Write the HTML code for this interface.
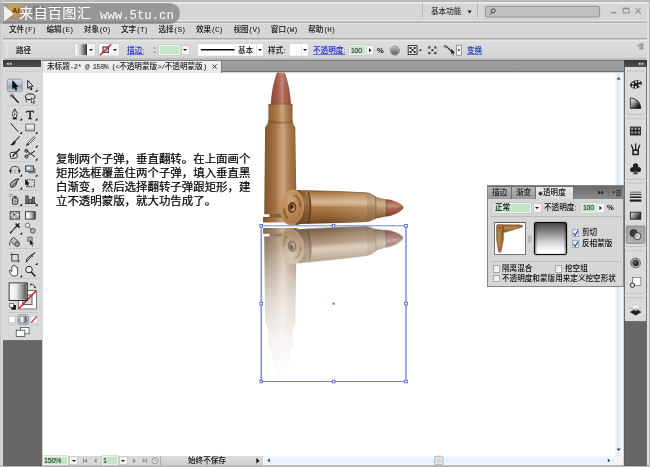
<!DOCTYPE html>
<html lang="zh-CN">
<head>
<meta charset="utf-8">
<title>Adobe Illustrator - 未标题-2</title>
<style>
*{box-sizing:border-box;margin:0;padding:0}
html,body{width:650px;height:467px;overflow:hidden;background:#d3d3d3}
body{position:relative;font-family:"Liberation Sans","Noto Sans CJK SC",sans-serif;font-size:7.65px;color:#1c1c1c}
.a{position:absolute}
.t{position:absolute;white-space:nowrap;line-height:10px;height:10px;font-size:7.6px;color:#101010;font-weight:500}
.lnk{color:#1c2cc8;text-decoration:underline;text-decoration-thickness:.5px;text-underline-offset:.8px;text-decoration-color:rgba(28,44,200,.55)}
.fld{position:absolute;background:#c2e6c8;border:.9px solid #f1f1f1;box-shadow:0 0 0 .5px #bcbcbc}
.btn{position:absolute;background:#f3f3f3;border:.5px solid #d0d0d0}
.btn:after{content:"";position:absolute;left:50%;top:50%;margin:-.8px 0 0 -2.2px;border:2.2px solid transparent;border-top:2.6px solid #111;border-bottom:0}
#title{left:0;top:0;width:650px;height:23px;background:linear-gradient(#c8c8c8 0,#b6b6b6 .7px,#b6b6b6 1.7px,#ececec 2.4px,#ececec 3.3px,#d6d6d6 4px,#d6d6d6 19.8px,#e2e2e2 20.3px,#e2e2e2 21.2px,#b2b2b2 21.7px,#b2b2b2 22.7px,#e2e2e2 23px)}
#menu{left:0;top:23px;width:650px;height:17.8px;background:linear-gradient(#e2e2e2 0,#e2e2e2 .8px,#d6d6d6 1.4px,#d6d6d6 14.8px,#a6a6a6 15.2px,#a6a6a6 16.1px,#e8e8e8 16.8px,#e8e8e8 17.8px)}
#menu span{position:absolute;top:1.6px;line-height:10px;font-size:7.6px;color:#101010;white-space:nowrap;font-weight:500}
.e,#menu i{font-family:"Liberation Mono",monospace;font-style:normal;letter-spacing:-.76px;font-size:7.6px}
#ctrlbg{left:0;top:40.8px;width:650px;height:20px;background:#d6d6d6}
#ctrl{left:4px;top:40.8px;width:642.4px;height:19.2px;background:linear-gradient(#dddddd 0,#d5d5d5 17.2px,#b4b4b4 17.6px,#b4b4b4 18.4px,#dcdcdc 18.8px,#dcdcdc 19.2px)}
#tabs{left:4px;top:59.9px;width:643px;height:12.6px;background:linear-gradient(#7c7c7c 0,#7c7c7c .8px,#a0a0a0 1.5px,#969696 11px,#707070 11.6px,#707070 12.6px)}
#tab{left:42px;top:60.6px;width:179.6px;height:12px;background:linear-gradient(#f0f0f0,#e8e8e8);border-right:1px solid #7e7e7e;border-left:1px solid #c8c8c8}
#tabt{left:47.4px;top:61.6px;font-size:7.6px;color:#222}
#canvas{left:42.5px;top:72.5px;width:571.5px;height:383px;background:#fff}
#vscroll{left:613.8px;top:72.5px;width:9.5px;height:383px;background:linear-gradient(90deg,#fdfeff,#dfebfa 40%,#e9f1fb 70%,#fbfdff)}
#hscroll{left:262px;top:455.5px;width:352px;height:9.6px;background:linear-gradient(#f6faff,#e3eefb 50%,#f2f7fd)}
#corner{left:613.8px;top:455.5px;width:9.6px;height:9.8px;background:#f4f4f4}
#tools{left:3.1px;top:60px;width:38.8px;height:281px;background:#d9d9d9}
#toolhead{left:3.1px;top:60px;width:38.4px;height:7.4px;background:linear-gradient(#383838,#505050)}
#ldark{left:3.1px;top:340px;width:38.8px;height:125.6px;background:linear-gradient(#7a7a7a 0,#666 1.2px,#666 100%)}
#rdock{left:623.5px;top:60px;width:23.6px;height:261.5px;background:#dadada;border-left:1px solid #6e6e6e;border-right:1px solid #7c7c7c}
#rhead{left:624.2px;top:60px;width:22.6px;height:7.4px;background:linear-gradient(#383838,#505050)}
#rdark{left:623.5px;top:320.9px;width:23.6px;height:144.8px;background:linear-gradient(#7a7a7a 0,#666 1.2px,#666 100%);border-left:1px solid #5a5a5a;border-right:1px solid #6a6a6a}
#ledge{left:0;top:2px;width:3.1px;height:465px;background:linear-gradient(90deg,#c6c6ce 0,#cfcfd6 1.2px,#d8d8d8 1.6px,#d6d6d6 100%)}
#redge{left:647.1px;top:2px;width:2.9px;height:465px;background:linear-gradient(90deg,#e0e0e0 0,#dedede 1.8px,#b4b4b4 2.2px,#b4b4b4 100%)}
#bedge{left:0;top:465.4px;width:650px;height:1.6px;background:#b9b9b9}
#status{left:42.5px;top:455.5px;width:220px;height:9.8px;background:#d8d8d8}
#desc{left:55.6px;top:152.9px;font-size:11.45px;line-height:13.85px;color:#000;font-weight:400;-webkit-text-stroke:.22px #000;white-space:nowrap;font-family:"Liberation Sans","Noto Sans CJK SC",sans-serif}
#wm{left:-14px;top:2.8px;width:194.4px;height:21px;border-radius:10.5px;background:rgba(90,90,90,.51)}
#wmt{left:18.7px;top:3.1px;height:21px;line-height:21px;color:#fff;white-space:nowrap;font-size:14.2px;letter-spacing:.22px}
#wmt b{font-family:"Liberation Mono",monospace;font-weight:normal;font-size:12.3px;margin-left:9px;letter-spacing:0;position:relative;top:.8px}
#panel{left:487.4px;top:185.4px;width:136.6px;height:101.8px;background:#d6d6d6;border:1px solid #868686}
#ptabs{left:488.4px;top:186.2px;width:134.6px;height:12.6px;background:linear-gradient(#6a6a6a,#8c8c8c)}
.ptab{position:absolute;top:186.6px;height:12.2px;background:linear-gradient(#b4b4b4,#9c9c9c);border-right:1px solid #6e6e6e}
.chk{position:absolute;width:7.6px;height:7.6px;background:linear-gradient(135deg,#e2e2e2,#fff);border:.7px solid #a2aab4}
svg{position:absolute;left:0;top:0;overflow:visible}
.t,#menu,#desc,#wmt,#tabt{will-change:transform}
</style>
</head>
<body>
<div id="title" class="a"></div>
<div id="menu" class="a">
<span style="left:9px">文件<i>(F)</i></span><span style="left:46.4px">编辑<i>(E)</i></span><span style="left:83.8px">对象<i>(O)</i></span><span style="left:121px">文字<i>(T)</i></span><span style="left:158.4px">选择<i>(S)</i></span><span style="left:196px">效果<i>(C)</i></span><span style="left:233.4px">视图<i>(V)</i></span><span style="left:270.8px">窗口<i>(W)</i></span><span style="left:308.2px">帮助<i>(H)</i></span>
</div>
<div id="ctrlbg" class="a"></div>
<div id="ctrl" class="a"></div>
<div id="ledge" class="a"></div>
<div id="redge" class="a"></div>
<div id="tabs" class="a"></div>
<div id="tab" class="a"></div>
<div id="tabt" class="t">未标题<span class="e">-2* @ 150% (&lt;</span>不透明蒙版<span class="e">&gt;/</span>不透明蒙版<span class="e">)</span></div>
<svg width="650" height="467" viewBox="0 0 650 467"><path d="M212.600 64.400l4 4.200M216.600 64.400l-4 4.200" stroke="#222" stroke-width=".9"/></svg>
<div id="canvas" class="a"></div>
<div id="vscroll" class="a"></div>
<div id="hscroll" class="a"></div>
<div id="corner" class="a"></div>
<div id="status" class="a"></div>
<div id="bedge" class="a"></div>
<svg id="art" class="a" width="650" height="467" viewBox="0 0 650 467" style="clip-path:inset(72.4px 0 0 0)">
<defs>
<linearGradient id="gBodyV" x1="0" x2="1" y1="0" y2="0">
<stop offset="0" stop-color="#7a5632"/><stop offset="0.05" stop-color="#865a30"/><stop offset="0.2" stop-color="#94653a"/><stop offset="0.36" stop-color="#a87545"/><stop offset="0.5" stop-color="#bf9670"/><stop offset="0.59" stop-color="#c9a785"/><stop offset="0.68" stop-color="#bb9064"/><stop offset="0.8" stop-color="#a87646"/><stop offset="0.93" stop-color="#9c6c40"/><stop offset="1" stop-color="#86592e"/>
</linearGradient>
<linearGradient id="gNeckV" x1="0" x2="1" y1="0" y2="0">
<stop offset="0" stop-color="#805a34"/><stop offset="0.06" stop-color="#946638"/><stop offset="0.22" stop-color="#a06e3c"/><stop offset="0.38" stop-color="#ae7e4c"/><stop offset="0.5" stop-color="#c0986e"/><stop offset="0.58" stop-color="#c8a582"/><stop offset="0.68" stop-color="#ba8e62"/><stop offset="0.82" stop-color="#a87648"/><stop offset="0.94" stop-color="#9a6a3e"/><stop offset="1" stop-color="#84582e"/>
</linearGradient>
<linearGradient id="gHeadV" x1="0" x2="1" y1="0" y2="0">
<stop offset="0" stop-color="#844436"/><stop offset="0.1" stop-color="#96503f"/><stop offset="0.3" stop-color="#a25a48"/><stop offset="0.48" stop-color="#b47262"/><stop offset="0.57" stop-color="#c08878"/><stop offset="0.68" stop-color="#ae6856"/><stop offset="0.85" stop-color="#a05a48"/><stop offset="1" stop-color="#88483a"/>
</linearGradient>
<linearGradient id="gBodyH" x1="0" x2="0" y1="0" y2="1">
<stop offset="0" stop-color="#6a4420"/><stop offset="0.04" stop-color="#a07040"/><stop offset="0.12" stop-color="#b4844e"/><stop offset="0.25" stop-color="#caa278"/><stop offset="0.34" stop-color="#d6b896"/><stop offset="0.44" stop-color="#c8a27a"/><stop offset="0.5" stop-color="#ad7a48"/><stop offset="0.65" stop-color="#a06c3a"/><stop offset="0.8" stop-color="#8c5c2e"/><stop offset="0.93" stop-color="#7a4e26"/><stop offset="1" stop-color="#5e3c1c"/>
</linearGradient>
<linearGradient id="gNeckH" x1="0" x2="0" y1="0" y2="1">
<stop offset="0" stop-color="#86623e"/><stop offset="0.08" stop-color="#b08c62"/><stop offset="0.22" stop-color="#c8a882"/><stop offset="0.4" stop-color="#ccae8a"/><stop offset="0.52" stop-color="#b8946a"/><stop offset="0.7" stop-color="#a58056"/><stop offset="0.88" stop-color="#8c663c"/><stop offset="1" stop-color="#74502c"/>
</linearGradient>
<linearGradient id="gHeadH" x1="0" x2="0" y1="0" y2="1">
<stop offset="0" stop-color="#884838"/><stop offset="0.1" stop-color="#a05a48"/><stop offset="0.28" stop-color="#b87868"/><stop offset="0.4" stop-color="#c48e7e"/><stop offset="0.52" stop-color="#b06a58"/><stop offset="0.7" stop-color="#a05846"/><stop offset="0.9" stop-color="#864436"/><stop offset="1" stop-color="#743a2e"/>
</linearGradient>
<linearGradient id="gTipH" x1="0" x2="1" y1="0" y2="0"><stop offset="0" stop-color="#5a2418" stop-opacity="0"/><stop offset=".6" stop-color="#5a2418" stop-opacity="0"/><stop offset="1" stop-color="#5a2418" stop-opacity=".35"/></linearGradient>
<linearGradient id="gBeige" x1="325" x2="376" y1="0" y2="0" gradientUnits="userSpaceOnUse"><stop offset="0" stop-color="#d8ccb8" stop-opacity="0"/><stop offset="1" stop-color="#d8ccb8" stop-opacity=".3"/></linearGradient>
<radialGradient id="gCap" cx=".4" cy=".3" r=".85">
<stop offset="0" stop-color="#cfa274"/><stop offset=".4" stop-color="#be8c5a"/><stop offset=".75" stop-color="#ac7642"/><stop offset="1" stop-color="#8e5e30"/>
</radialGradient>
<linearGradient id="gRim" x1="0" x2="0" y1="0" y2="1"><stop offset="0" stop-color="#7a5430"/><stop offset=".3" stop-color="#a07648"/><stop offset=".6" stop-color="#86592e"/><stop offset="1" stop-color="#6a4522"/></linearGradient>
<linearGradient id="gFade" x1="0" x2="0" y1="226" y2="381" gradientUnits="userSpaceOnUse">
<stop offset="0" stop-color="#fff" stop-opacity=".92"/><stop offset=".155" stop-color="#fff" stop-opacity=".7"/><stop offset=".32" stop-color="#fff" stop-opacity=".46"/><stop offset=".48" stop-color="#fff" stop-opacity=".26"/><stop offset=".74" stop-color="#fff" stop-opacity=".08"/><stop offset="1" stop-color="#fff" stop-opacity="0"/>
</linearGradient>
<filter id="fDesat" x="-5%" y="-5%" width="110%" height="110%" color-interpolation-filters="sRGB"><feColorMatrix type="saturate" values=".66"/></filter>
<mask id="mFade" maskUnits="userSpaceOnUse" x="255" y="226" width="160" height="156"><rect x="255" y="226" width="160" height="156" fill="url(#gFade)"/></mask>
<g id="bv">
<!-- vertical bullet -->
<path d="M270.8 104.4 C271.3 93 273.6 81 277.1 72.3 Q279 68.4 280.85 68.4 Q282.7 68.4 284.6 72.3 C288.1 81 290.4 93 290.9 104.4 Z" fill="url(#gHeadV)"/>
<path d="M268.4 104.2 Q280.4 102.6 292.5 104.2 L292.5 121 L268.4 121 Z" fill="url(#gNeckV)"/>
<path d="M268.4 120.4 L292.5 120.4 Q293 124.6 295.3 127.6 L295.3 129 L265.1 129 L265.1 127.6 Q267.8 124.6 268.4 120.4 Z" fill="url(#gBodyV)"/>
<path d="M265.1 128 L295.3 128 L296.6 214.2 L264.2 214.2 Z" fill="url(#gBodyV)"/>
<path d="M268.4 120.2 Q280.4 123 292.5 120.2 L293 122.600 Q280.400 125.600 267.900 122.600 Z" fill="#6e4a26" opacity=".4"/>
<path d="M268.4 104 Q280.4 102.400 292.5 104 L292.5 105.200 Q280.400 103.800 268.4 105.200 Z" fill="#6e4630" opacity=".55"/>
<rect x="269.4" y="213.8" width="27.2" height="3.4" fill="#87603a"/>
<rect x="263" y="216.9" width="34" height="5.6" rx=".8" fill="url(#gBodyV)"/>
<rect x="263" y="216.9" width="34" height="1" fill="#6e4a26" opacity=".45"/>
</g>
<g id="bh">
<!-- horizontal bullet -->
<path d="M300 190.400 L340 191.600 L366 192.800 Q369.600 193 371 194.200 L376 197.100 L376 218.500 L371 220.800 Q369.600 221.800 366 222 L340 222.900 L300 224 Z" fill="url(#gBodyH)"/>
<path d="M325 190 L366 192.800 Q369.600 193 371 194.200 L376 197.100 L376 218.500 L371 220.800 Q369.600 221.800 366 222 L325 224 Z" fill="url(#gBeige)"/>
<path d="M375.600 197 L386.200 199.300 L386.200 216.400 L375.600 218.600 Z" fill="url(#gNeckH)"/>
<path d="M385.800 199.200 C393.500 199.600 401 203.400 403.100 206.200 Q403.900 207.300 403.100 208.500 C401 211.800 393.500 216 385.800 216.500 Z" fill="url(#gHeadH)"/>
<path d="M385.800 199.200 C393.500 199.600 401 203.400 403.100 206.200 Q403.900 207.300 403.100 208.500 C401 211.800 393.500 216 385.800 216.500 Z" fill="url(#gTipH)"/>
<path d="M366 192.800 Q369.600 193 371 194.200 L376 197.100 L376 218.500 L371 220.800 Q369.600 221.800 366 222 Q368.400 207.400 366 192.800Z" fill="#6a4420" opacity=".16"/>
<path d="M303 190.500 L340 191.600 L366 192.800 Q369.600 193 371 194.200 L376 197.100" fill="none" stroke="#5c3e20" stroke-width=".8" opacity=".7"/>
<path d="M375.400 197 Q377 207.800 375.400 218.600" fill="none" stroke="#6e4a28" stroke-width=".7" opacity=".7"/>
<path d="M385.800 199.200 Q387.200 207.800 385.800 216.500" fill="none" stroke="#7a4a34" stroke-width=".7" opacity=".7"/>
<!-- cap rim side -->
<ellipse cx="297.600" cy="207.500" rx="12.400" ry="17.500" transform="rotate(5 297.600 207.500)" fill="url(#gRim)"/>
<path d="M308.400 192.600 Q312.600 207.500 308.200 223.200" fill="none" stroke="#57381a" stroke-width="2" opacity=".8"/>
<!-- cap face -->
<ellipse cx="292" cy="207.500" rx="12.100" ry="17.700" transform="rotate(6 292 207.500)" fill="url(#gCap)"/>
<ellipse cx="292" cy="207.500" rx="11.300" ry="16.900" transform="rotate(6 292 207.500)" fill="none" stroke="#e0b88a" stroke-width=".7" opacity=".6"/>
<ellipse cx="292.200" cy="207.500" rx="7.800" ry="12.200" transform="rotate(6 292.200 207.500)" fill="none" stroke="#5a3416" stroke-width="1.900" pathLength="64.3" stroke-dasharray="0 20 1.3 .9 1 1 1.4 .9 1.1 1 1.3 .9 0 17.7 1.2 1 1.4 .9 1 1 1.3 .9 1.1 1 1.4 .9 1.2 1.5" opacity=".8"/>
<ellipse cx="292.100" cy="207.500" rx="4.200" ry="5.600" transform="rotate(6 292.100 207.500)" fill="#62401e"/>
<ellipse cx="292.400" cy="207.800" rx="2.700" ry="3.800" transform="rotate(6 292.400 207.800)" fill="#a67c4e"/>
<ellipse cx="291.700" cy="207" rx="1.700" ry="2.500" transform="rotate(6 291.700 207)" fill="#452810"/>
<ellipse cx="293" cy="209.200" rx=".9" ry="1.100" fill="#d8b48a"/>
</g>
</defs>
<g mask="url(#mFade)" filter="url(#fDesat)"><use href="#bv" transform="matrix(1 0 0 -1 0 450.6)"/><g transform="rotate(-4.4 292 246.3)"><use href="#bh" transform="matrix(1 0 0 -1 0 453.8)"/></g></g>
<use href="#bv"/><use href="#bh"/>
<!-- selection -->
<path d="M261.2 225.8V381.5M406.0 225.8V381.5" fill="none" stroke="#6c7edc" stroke-width="1.3"/>
<path d="M261.2 225.8H406.0M261.2 381.5H406.0" fill="none" stroke="#6f84e4" stroke-width="1"/>
<g fill="#fff" stroke="#5566c8" stroke-width=".9"><rect x="259.85" y="224.45" width="2.7" height="2.7"/><rect x="332.25" y="224.45" width="2.7" height="2.7"/><rect x="404.65" y="224.45" width="2.7" height="2.7"/><rect x="259.85" y="302.30" width="2.7" height="2.7"/><rect x="404.65" y="302.30" width="2.7" height="2.7"/><rect x="259.85" y="380.15" width="2.7" height="2.7"/><rect x="332.25" y="380.15" width="2.7" height="2.7"/><rect x="404.65" y="380.15" width="2.7" height="2.7"/></g>
<rect x="332.6" y="302.6" width="2" height="2" fill="#4a6ee0"/>
</svg>
<div id="desc" class="a">复制两个子弹，垂直翻转。在上面画个<br>矩形选框覆盖住两个子弹，填入垂直黑<br>白渐变，然后选择翻转子弹跟矩形，建<br>立不透明蒙版，就大功告成了。</div>
<div id="tools" class="a"></div>
<div id="toolhead" class="a"></div>
<div id="ldark" class="a"></div>
<div id="rdock" class="a"></div>
<div id="rhead" class="a"></div>
<div id="rdark" class="a"></div>
<svg id="toolsvg" width="650" height="467" viewBox="0 0 650 467">
<defs>
<linearGradient id="tsel" x1="0" x2="0" y1="0" y2="1"><stop offset="0" stop-color="#d6e0ea"/><stop offset=".5" stop-color="#a9b8c6"/><stop offset=".52" stop-color="#8c9cab"/><stop offset="1" stop-color="#c3cfdb"/></linearGradient>
<linearGradient id="gfill" x1="0" x2="1" y1="0" y2="0"><stop offset="0" stop-color="#fff"/><stop offset=".42" stop-color="#e6e6e6"/><stop offset="1" stop-color="#484848"/></linearGradient>
<linearGradient id="grect" x1="0" x2="0" y1="0" y2="1"><stop offset="0" stop-color="#fcfcfc"/><stop offset=".5" stop-color="#dfe3e8"/><stop offset="1" stop-color="#aab2bc"/></linearGradient>
</defs>
<path d="M8.6 62.2l-2 1.6 2 1.6zM11.4 62.2l-2 1.6 2 1.6z" fill="#e8e8e8"/>
<path d="M7 71.3h32.5" stroke="#bcbcbc" stroke-width="1.2" stroke-dasharray=".8 .8"/>
<path d="M7 105.4h32" stroke="#b2b2b2" stroke-width=".7"/><path d="M7 106.10000000000001h32" stroke="#e6e6e6" stroke-width=".6"/>
<path d="M7 162h32" stroke="#b2b2b2" stroke-width=".7"/><path d="M7 162.7h32" stroke="#e6e6e6" stroke-width=".6"/>
<path d="M7 190.7h32" stroke="#b2b2b2" stroke-width=".7"/><path d="M7 191.39999999999998h32" stroke="#e6e6e6" stroke-width=".6"/>
<path d="M7 207h32" stroke="#b2b2b2" stroke-width=".7"/><path d="M7 207.7h32" stroke="#e6e6e6" stroke-width=".6"/>
<path d="M7 248.6h32" stroke="#b2b2b2" stroke-width=".7"/><path d="M7 249.29999999999998h32" stroke="#e6e6e6" stroke-width=".6"/>
<path d="M7 279h32" stroke="#b2b2b2" stroke-width=".7"/><path d="M7 279.7h32" stroke="#e6e6e6" stroke-width=".6"/>
<path d="M7 312.8h32" stroke="#b2b2b2" stroke-width=".7"/><path d="M7 313.5h32" stroke="#e6e6e6" stroke-width=".6"/>
<path d="M7 325.2h32" stroke="#b2b2b2" stroke-width=".7"/><path d="M7 325.9h32" stroke="#e6e6e6" stroke-width=".6"/>
<rect x="7.3" y="79.2" width="14.8" height="12.4" rx="1.6" fill="url(#tsel)" stroke="#7d8d9c" stroke-width=".8"/>
<path d="M12.700000000000001 80.80000000000001v8l1.7-1.6 1.3 3 1.2-.5-1.300-3h2.300z" fill="#0a0a0a" stroke="#0a0a0a" stroke-width=".7" stroke-linejoin="round"/>
<path d="M27.8 80.4v8l1.7-1.6 1.3 3 1.2-.5-1.300-3h2.300z" fill="#fff" stroke="#0a0a0a" stroke-width=".95" stroke-linejoin="round"/>
<path d="M37.5 89.30000000000001v2.400h-2.400z" fill="#0c0c0c"/>
<path d="M12.600000000000001 96.2L18.6 102.80000000000001" stroke="#1a1a1a" stroke-width="1.3"/><path d="M11.8 93.4v4.4M9.600000000000001 95.60000000000001h4.4M10.200000000000001 94.0l3.2 3.2M13.4 94.0l-3.2 3.2" stroke="#333" stroke-width=".5"/>
<ellipse cx="30.2" cy="96.80000000000001" rx="4.8" ry="2.9" fill="none" stroke="#1a1a1a" stroke-width="1"/><path d="M26.599999999999998 98.80000000000001q-1.6 2.2 .4 3.6" fill="none" stroke="#1a1a1a" stroke-width=".8"/><path d="M31.4 97.80000000000001v5.2l1.2-1.1 .9 1.9 .8-.4-.9-1.9h1.6z" fill="#fff" stroke="#111" stroke-width=".6"/>
<path d="M14.8 108.8l2.4 4.6-1 4h-2.8l-1-4z" fill="#fff" stroke="#1a1a1a" stroke-width=".9" stroke-linejoin="round"/><path d="M14.8 109.60000000000001v4.4" stroke="#1a1a1a" stroke-width=".6"/><circle cx="14.8" cy="114.60000000000001" r=".8" fill="#1a1a1a"/><rect x="12.8" y="117.8" width="4" height="1.6" fill="#1a1a1a"/>
<path d="M22.1 118.10000000000001v2.400h-2.400z" fill="#0c0c0c"/>
<text x="30.0" y="118.60000000000001" font-family="Liberation Serif,serif" font-size="12.6" text-anchor="middle" fill="#0a0a0a" stroke="#0a0a0a" stroke-width=".3">T</text>
<path d="M37.5 118.10000000000001v2.400h-2.400z" fill="#0c0c0c"/>
<path d="M10.8 123.3L18.2 131.7" stroke="#1a1a1a" stroke-width="1"/>
<path d="M22.1 131.6v2.400h-2.400z" fill="#0c0c0c"/>
<rect x="25.799999999999997" y="124.10000000000001" width="8.6" height="6.8" fill="url(#grect)" stroke="#4a5058" stroke-width=".8"/>
<path d="M37.5 131.6v2.400h-2.400z" fill="#0c0c0c"/>
<path d="M19.4 136.6L14.600000000000001 141.6" stroke="#3a3a3a" stroke-width="1.1" stroke-linecap="round"/><path d="M14.8 141.0q-1.6 .2-2.300 1.800t-2.300 2.200q3 .8 4.400-.8t1-2.400z" fill="#1c1c1c"/>
<path d="M34.0 136.6l1.2 1.2-6.2 6.4-2.4 1.2 1.2-2.4z" fill="#fff" stroke="#1a1a1a" stroke-width=".8" stroke-linejoin="round"/><path d="M26.599999999999998 145.39999999999998l1.2-2.4 1.2 1.2z" fill="#1a1a1a"/>
<path d="M37.5 145.1v2.400h-2.400z" fill="#0c0c0c"/>
<rect x="10.200000000000001" y="152.2" width="6.6" height="5.8" rx=".8" fill="#eee" stroke="#222" stroke-width=".9" transform="rotate(-8 14.8 154.2)"/><path d="M19.4 149.2L13.200000000000001 155.6" stroke="#222" stroke-width="1.5" stroke-linecap="round"/><path d="M13.4 154.79999999999998l-1.6 2.4 2.6-1.2z" fill="#222"/>
<path d="M25.6 150.2L35.0 156.79999999999998M25.6 156.39999999999998L35.0 151.0" stroke="#1a1a1a" stroke-width="1"/><circle cx="26.4" cy="150.79999999999998" r="1.5" fill="none" stroke="#1a1a1a" stroke-width=".9"/><circle cx="26.4" cy="156.6" r="1.5" fill="none" stroke="#1a1a1a" stroke-width=".9"/>
<path d="M37.5 158.1v2.400h-2.400z" fill="#0c0c0c"/>
<path d="M10.4 170.9a4.5 4.6 0 0 1 9 0" fill="none" stroke="#3a3a3a" stroke-width="1.1"/><path d="M9.200000000000001 170.10000000000002l1.200 3.400 1.600-3.200zM20.6 170.10000000000002l-1.200 3.400-1.600-3.200z" fill="#222"/><path d="M10.8 173.10000000000002l3.600-3.600v3.600zM19.0 173.10000000000002l-3.600-3.600v3.600z" fill="#f0f0f0" stroke="#8a8a8a" stroke-width=".5"/>
<path d="M22.1 174.20000000000002v2.400h-2.400z" fill="#0c0c0c"/>
<rect x="29.0" y="168.9" width="6" height="4" fill="#a0a0a0" stroke="#4a4a4a" stroke-width=".7"/><rect x="25.4" y="165.9" width="8.200" height="5.600" fill="#9fb0c2" stroke="#3a3a3a" stroke-width=".8"/><rect x="26.8" y="167.10000000000002" width="3.600" height="2" fill="#f4f6f8"/>
<path d="M37.5 174.20000000000002v2.400h-2.400z" fill="#0c0c0c"/>
<path d="M11.4 187.6q-2.6-3.6 1.2-6.4t6.4-2.4q-2.2 1.6-2.4 4t-2 3.6q-1.8 1-3.2 1.2z" fill="#a8a8a8" stroke="#222" stroke-width=".9"/><path d="M12.0 186.6l5.6-5.8" stroke="#222" stroke-width=".8"/>
<path d="M22.1 187.1v2.400h-2.400z" fill="#0c0c0c"/>
<rect x="26.8" y="179.79999999999998" width="7.6" height="7" fill="none" stroke="#222" stroke-width="1" stroke-dasharray="1.4 1"/><path d="M25.2 179.2v6l1.500-1.400 1.100 2.400 1-.5-1.100-2.300h2.100z" fill="#0a0a0a"/>
<rect x="12.4" y="197.89999999999998" width="5.4" height="6.4" rx="1" fill="#bcbcbc" stroke="#222" stroke-width=".9"/><rect x="13.600000000000001" y="195.89999999999998" width="3" height="2" fill="#444"/><path d="M10.200000000000001 194.7l.1.1M11.8 194.29999999999998l.1.1M10.0 196.5l.1.1M11.600000000000001 196.1l.1.1" stroke="#222" stroke-width="1" stroke-linecap="round"/><circle cx="15.200000000000001" cy="201.29999999999998" r="1.2" fill="#8a8a8a"/>
<path d="M22.1 203.6v2.400h-2.400z" fill="#0c0c0c"/>
<path d="M25.0 203.5h11" fill="none" stroke="#222" stroke-width=".9"/><rect x="25.799999999999997" y="195.89999999999998" width="2.400" height="7.400" fill="#6e6e6e" stroke="#222" stroke-width=".6"/><rect x="29.0" y="199.29999999999998" width="2.400" height="4" fill="#8a8a8a" stroke="#222" stroke-width=".6"/><rect x="32.2" y="197.1" width="2.400" height="6.200" fill="#6e6e6e" stroke="#222" stroke-width=".6"/>
<path d="M37.5 203.6v2.400h-2.400z" fill="#0c0c0c"/>
<rect x="10.200000000000001" y="211.70000000000002" width="9.4" height="7.4" fill="#aab0b6" stroke="#333" stroke-width=".9"/><path d="M10.200000000000001 215.3q4.6-2.6 9.4 0M14.8 211.70000000000002q-2 3.6 0 7.4" fill="none" stroke="#f4f4f4" stroke-width=".8"/><circle cx="14.200000000000001" cy="214.5" r="1" fill="#222"/>
<rect x="25.4" y="211.70000000000002" width="9.8" height="7.4" fill="url(#gfill)" stroke="#333" stroke-width=".9"/>
<path d="M19.200000000000003 223.6L12.200000000000001 230.79999999999998l-1.8 2.2" stroke="#222" stroke-width="1.3" stroke-linecap="round" fill="none"/><path d="M16.2 224.2l2.8 2.8" stroke="#222" stroke-width="1.8" stroke-linecap="round"/><path d="M14.600000000000001 227.79999999999998l-3 3.2" stroke="#eee" stroke-width=".6"/>
<path d="M22.1 232.1v2.400h-2.400z" fill="#0c0c0c"/>
<circle cx="27.599999999999998" cy="225.39999999999998" r="2.3" fill="#e8e8e8" stroke="#555" stroke-width=".8"/><circle cx="32.8" cy="230.79999999999998" r="2.5" fill="#b4b4b4" stroke="#444" stroke-width=".8"/><path d="M28.8 226.79999999999998l3 3" stroke="#555" stroke-width=".8" stroke-dasharray="1 .7"/>
<path d="M10.200000000000001 240.4l3.6-3 4.4 4.2-3.6 3.4z" fill="#c8c8c8" stroke="#222" stroke-width=".9" stroke-linejoin="round"/><circle cx="17.2" cy="244.2" r="2.4" fill="#9a9a9a" stroke="#333" stroke-width=".8"/><path d="M10.0 242.0q-1 2.2 0 3.4" stroke="#222" stroke-width=".9" fill="none"/>
<path d="M27.8 237.0h4.4v4.4h-4.4z" fill="#b0b0b0" stroke="#444" stroke-width=".7"/><path d="M29.8 239.4v6.2l1.4-1.3 1.1 2.2 1-.5-1.1-2.2h2z" fill="#111" stroke="#eee" stroke-width=".3"/>
<rect x="11.8" y="254.60000000000002" width="6.4" height="6.4" fill="none" stroke="#333" stroke-width=".9"/><path d="M10.0 254.60000000000002h1.8M11.8 252.8v1.8M18.2 261.0h1.8M18.2 261.0v1.8" stroke="#333" stroke-width=".7"/>
<path d="M34.8 252.60000000000002L28.8 259.20000000000005l-2.6 3 .8-3.8z" fill="#c8c8c8" stroke="#222" stroke-width=".9" stroke-linejoin="round"/><path d="M31.2 255.20000000000002l1.8 1.6" stroke="#222" stroke-width=".8"/>
<path d="M37.5 262.5v2.400h-2.400z" fill="#0c0c0c"/>
<path d="M12.4 275.8q-2.6-2.6-3-4.6t1.4-.6l1 1.2v-5q.2-1 1.2-.2v-1q.6-1.2 1.6 0v.6q.8-1 1.6.2v1q.8-.8 1.4.4v5.200q0 2-1.400 3z" fill="#fff" stroke="#222" stroke-width=".8" stroke-linejoin="round"/>
<path d="M22.1 274.9v2.400h-2.400z" fill="#0c0c0c"/>
<circle cx="29.0" cy="269.6" r="3.3" fill="#eef2f6" stroke="#222" stroke-width="1"/><path d="M31.4 272.2l3.6 3.8" stroke="#222" stroke-width="1.6" stroke-linecap="round"/>
<rect x="18.4" y="290.6" width="18" height="18.4" fill="#fff" stroke="#6a6a6a" stroke-width=".9"/><rect x="22.8" y="295" width="9.2" height="9.600" fill="#d9d9d9" stroke="#4a4a4a" stroke-width=".9"/>
<path d="M18.6 308.8L36.2 290.800" stroke="#d4142c" stroke-width="1.4"/>
<rect x="9.2" y="283" width="18" height="17.4" fill="url(#gfill)" stroke="#1c1c1c" stroke-width="1"/><rect x="10" y="283.8" width="16.4" height="15.800" fill="none" stroke="#fff" stroke-width=".5" opacity=".7"/>
<path d="M31 284.400q3.200-.6 3.800 3.200" fill="none" stroke="#222" stroke-width=".8"/><path d="M30.400 283.200l1.800 1.200-1.800 1.400zM33.600 286.800l1.400 1.800 1.200-1.800z" fill="#222"/>
<rect x="11.8" y="305.400" width="3.800" height="3.800" fill="#111" stroke="#111" stroke-width=".8"/><rect x="9.8" y="303.400" width="3.800" height="3.800" fill="#fff" stroke="#444" stroke-width=".7"/>
<rect x="8.6" y="316.200" width="6.400" height="6.600" fill="#fbfbfb" stroke="#b4b4b4" stroke-width=".6"/>
<rect x="18" y="314.600" width="10.400" height="9.600" rx="1.600" fill="url(#tsel)" stroke="#7d8d9c" stroke-width=".8"/><rect x="20.200" y="316.200" width="6" height="6.400" fill="url(#gfill)" stroke="#666" stroke-width=".5"/>
<rect x="30.800" y="316.200" width="6.400" height="6.600" fill="#fbfbfb" stroke="#c4c4c4" stroke-width=".6"/><path d="M31.200 322.600L36.800 316.400" stroke="#d4142c" stroke-width="1.100"/>
<rect x="20.400" y="327.600" width="8.600" height="6.200" fill="#fcfcfc" stroke="#444" stroke-width=".7"/><rect x="16.200" y="330.200" width="8.600" height="6.200" fill="#fcfcfc" stroke="#333" stroke-width=".7"/>
</svg>
<svg width="650" height="467" viewBox="0 0 650 467">
<defs><linearGradient id="cfill" x1="0" x2="1" y1="0" y2="0"><stop offset="0" stop-color="#fff"/><stop offset=".4" stop-color="#cfcfcf"/><stop offset="1" stop-color="#303030"/></linearGradient><linearGradient id="cglobe" x1="0" x2="0" y1="0" y2="1"><stop offset="0" stop-color="#c4c4c4"/><stop offset=".5" stop-color="#8a8a8a"/><stop offset="1" stop-color="#4e4e4e"/></linearGradient></defs>
<path d="M7.200 43v15" stroke="#ececec" stroke-width="1.800"/><path d="M7.200 43v15" stroke="#c4c4c4" stroke-width="1" stroke-dasharray=".7 .9"/>
<rect x="74.400" y="43.400" width="21" height="12.600" fill="#f3f3f3" stroke="#bdbdbd" stroke-width=".6"/><rect x="75.200" y="44.200" width="11.800" height="11" fill="url(#cfill)"/>
<rect x="98.800" y="43.400" width="20.800" height="12.600" fill="#f3f3f3" stroke="#bdbdbd" stroke-width=".6"/><rect x="99.600" y="44.200" width="11.600" height="11" fill="#fff"/><rect x="103" y="47" width="5.400" height="5.400" fill="#e4e4e4" stroke="#4e4e4e" stroke-width="1.300"/>
<path d="M100 55.200L111.200 44.200" stroke="#d0102c" stroke-width="1.300"/>
<path d="M153.200 48.400l1.400-1.800 1.400 1.800zM153.200 51.600l1.400 1.800 1.400-1.800z" fill="#8e8e8e"/>

<rect x="197.400" y="43.600" width="66" height="12.400" fill="#fff" stroke="#c0c0c0" stroke-width=".5"/><path d="M256.600 44v11.600" stroke="#d4d4d4" stroke-width=".6"/>
<path d="M200.800 49.800h33.800" stroke="#0a0a0a" stroke-width="1.500"/>
<rect x="289.200" y="43.600" width="19.400" height="12.400" fill="#fff" stroke="#c0c0c0" stroke-width=".5"/><path d="M301.400 44v11.600" stroke="#d4d4d4" stroke-width=".6"/>
<!-- icons -->
<circle cx="394.900" cy="50.600" r="4.500" fill="url(#cglobe)" stroke="#6a6a6a" stroke-width=".6"/><circle cx="394.900" cy="50.600" r="3.600" fill="none" stroke="#d8d8d8" stroke-width=".9" stroke-dasharray="1.300 1.500" opacity=".8"/>
<rect x="408.200" y="45.600" width="8.800" height="8.800" fill="#efefef" stroke="#222" stroke-width=".9"/><path d="M409.600 47h2v2h-2zM413.600 47h2v2h-2zM411.600 49h2v2h-2zM409.600 51h2v2h-2zM413.600 51h2v2h-2z" fill="#222"/>
<path d="M418.800 49.400h3.200l-1.600 2z" fill="#222"/>
<path d="M428.400 46.400h2v2h-2zM434.400 46.400h2v2h-2zM428.400 52h2v2h-2zM434.400 52h2v2h-2zM431.400 49.200h2v2h-2z" fill="#333"/><rect x="427.800" y="45.800" width="9.200" height="8.800" fill="none" stroke="#bdbdbd" stroke-width=".5"/>
<path d="M446.400 46.400l5.600 5.600" stroke="#222" stroke-width="1.100"/><path d="M445.200 44.600v3.600M443.400 46.400h3.600M444 45.200l2.400 2.400M446.400 45.200l-2.400 2.400" stroke="#444" stroke-width=".5"/><path d="M451 48.600v6l1.400-1.300 1 2.100.9-.4-1-2.100h2z" fill="#111" stroke="#eee" stroke-width=".3"/>
<rect x="456.400" y="45.200" width="5" height="10" fill="#f2f2f2" stroke="#6e6e6e" stroke-width=".6"/><path d="M457.400 49.400h3l-1.500 1.900z" fill="#222"/>
<path d="M636.800 45.400h1.800l-.9 1.200z" fill="#333"/><path d="M639.400 44h4M639.400 45.600h4M639.400 47.200h4M639.400 48.800h4" stroke="#444" stroke-width=".8" stroke-dasharray="1.200 .4"/>
</svg>
<div class="t" style="left:16px;top:46.3px">路径</div>
<div class="btn" style="left:87.400px;top:44.600px;width:7.600px;height:10.400px;border:0;background:none"></div>
<div class="btn" style="left:111.600px;top:44.600px;width:7.600px;height:10.400px;border:0;background:none"></div>
<div class="t lnk" style="left:127.400px;top:46.3px">描边:</div>
<div class="fld" style="left:159.400px;top:44.800px;width:20.600px;height:10px"></div>
<div class="btn" style="left:181.200px;top:44.600px;width:8.400px;height:10.400px"></div>
<div class="t" style="left:238.400px;top:46.1px">基本</div>
<div class="btn" style="left:257px;top:44.600px;width:6px;height:10.600px;background:none;border:0"></div>
<div class="t" style="left:268.400px;top:46.3px">样式:</div>
<div class="btn" style="left:302px;top:44.600px;width:6px;height:10.600px;background:none;border:0"></div>
<div class="t lnk" style="left:313px;top:46.3px">不透明度:</div>
<div class="fld" style="left:348.800px;top:44.800px;width:17.400px;height:10px"></div>
<div class="t" style="left:351.400px;top:46.1px;font-size:7px;letter-spacing:-.3px;color:#0c0c0c">100</div>
<div class="a" style="left:366px;top:44.800px;width:8.400px;height:10.600px;background:#f6f6f6;border:.5px solid #d4d4d4"></div>
<svg width="650" height="467" viewBox="0 0 650 467"><path d="M369 48l2.400 2.200-2.400 2.200z" fill="#222"/></svg>
<div class="t" style="left:376.600px;top:45.9px;font-size:7.600px;font-weight:bold">%</div>
<div class="t lnk" style="left:466.600px;top:46.3px">变换</div>
<svg width="650" height="467" viewBox="0 0 650 467">
<defs>
<linearGradient id="dg1" x1="0" x2="1" y1="0" y2="0"><stop offset="0" stop-color="#fff"/><stop offset="1" stop-color="#1e1e1e"/></linearGradient>
<radialGradient id="dg2" cx=".4" cy=".4" r=".6"><stop offset="0" stop-color="#6a6a6a"/><stop offset="1" stop-color="#0e0e0e"/></radialGradient>
<linearGradient id="dsel" x1="0" x2="0" y1="0" y2="1"><stop offset="0" stop-color="#a2a2a2"/><stop offset="1" stop-color="#b0b0b0"/></linearGradient>
<linearGradient id="dlay" x1="0" x2="0" y1="0" y2="1"><stop offset="0" stop-color="#fff"/><stop offset=".45" stop-color="#f0f0f0"/><stop offset="1" stop-color="#8c8c8c"/></linearGradient>
<linearGradient id="dgd" x1="0" x2="1" y1="0" y2="1"><stop offset="0" stop-color="#f4f4f4"/><stop offset=".35" stop-color="#a8a8a8"/><stop offset=".8" stop-color="#1a1a1a"/></linearGradient>
<linearGradient id="dgd2" x1="0" x2="1" y1="0" y2=".5"><stop offset="0" stop-color="#f4f4f4"/><stop offset=".4" stop-color="#a0a0a0"/><stop offset="1" stop-color="#2a2a2a"/></linearGradient>
</defs>
<path d="M640.400 62.200l-2 1.600 2 1.600zM643.200 62.200l-2 1.600 2 1.600z" fill="#e8e8e8"/>
<g stroke="#b6b6b6" stroke-width="1.200" stroke-dasharray=".8 .8"><path d="M627 71.300h17.600M627 118.600h17.600M627 183.200h17.600M627 250.600h17.600M627 297.600h17.600"/></g>
<g stroke="#a2a2a2" stroke-width=".7"><path d="M624.400 115h22.400M624.400 179.800h22.400M624.400 247h22.400M624.400 294h22.400"/></g>
<g stroke="#ececec" stroke-width=".6"><path d="M624.400 115.700h22.400M624.400 180.500h22.400M624.400 247.700h22.400M624.400 294.700h22.400"/></g>
<!-- color palette -->
<ellipse cx="636" cy="84.400" rx="6" ry="4" transform="rotate(-16 636 84.400)" fill="#222"/><circle cx="639.800" cy="85.400" r="1.300" fill="#dadada"/><circle cx="633" cy="83.400" r="1" fill="#f2f2f2"/><circle cx="636" cy="82" r="1" fill="#f2f2f2"/><circle cx="639" cy="81.600" r="1" fill="#f2f2f2"/><circle cx="632.800" cy="86.400" r="1" fill="#f2f2f2"/><circle cx="635.800" cy="87" r="1" fill="#f2f2f2"/>
<!-- color guide -->
<path d="M630.400 108.400v-10.600q9.600 1 10.600 10.600z" fill="url(#dgd)" stroke="#222" stroke-width=".8" stroke-linejoin="round"/>
<!-- swatches -->
<rect x="630" y="126.600" width="11" height="8.800" fill="#2a2a2a"/><path d="M631.200 127.800h2v2h-2zM634.600 127.800h2v2h-2zM638 127.800h2v2h-2zM631.200 131.400h2v2h-2zM634.600 131.400h2v2h-2zM638 131.400h2v2h-2z" fill="#a8a8a8"/>
<!-- brushes -->
<rect x="632.200" y="149.600" width="6.800" height="5.600" rx=".8" fill="#222"/><rect x="633.800" y="151" width="3.600" height="2.800" fill="#d0d0d0"/><path d="M633.200 149.400l-1.800-4.400M635.600 149.400v-5.400M638 149.400l1.800-4.400" stroke="#222" stroke-width="1.300" stroke-linecap="round"/>
<!-- symbols (club) -->
<circle cx="635.600" cy="165.800" r="2.600" fill="#222"/><circle cx="632.800" cy="169.600" r="2.600" fill="#222"/><circle cx="638.400" cy="169.600" r="2.600" fill="#222"/><path d="M635.600 168v3.600l-2 2.200h4l-2-2.200z" fill="#222" stroke="#222" stroke-width=".6"/>
<!-- stroke -->
<path d="M629.800 192.200h11.600" stroke="#222" stroke-width=".6"/><path d="M629.800 194.400h11.600" stroke="#222" stroke-width="1"/><path d="M629.800 197.200h11.600" stroke="#222" stroke-width="1.600"/><path d="M629.800 200.600h11.600" stroke="#222" stroke-width="2.200"/>
<!-- gradient -->
<rect x="630.400" y="212.200" width="10.400" height="7" fill="url(#dgd2)" stroke="#222" stroke-width=".9"/>
<!-- transparency selected -->
<rect x="626.200" y="226" width="18.600" height="17.400" rx="1.200" fill="url(#dsel)" stroke="#7a7a7a" stroke-width=".7"/>
<circle cx="633.600" cy="233.200" r="3.600" fill="#3c3c3c" stroke="#1e1e1e" stroke-width=".7"/><circle cx="637.400" cy="236.200" r="3.600" fill="#dcdcdc" fill-opacity=".75" stroke="#1e1e1e" stroke-width=".7"/>
<!-- appearance -->
<circle cx="635.600" cy="263" r="4.900" fill="#a8a8a8" stroke="#5a5a5a" stroke-width=".8"/><circle cx="635.600" cy="263" r="3" fill="url(#dg2)"/>
<!-- graphic styles -->
<rect x="632.600" y="277.400" width="8.200" height="8" fill="#fafafa" stroke="#6a6a6a" stroke-width=".7"/><circle cx="632.400" cy="285.200" r="2.200" fill="#d8d8d8" stroke="#222" stroke-width=".9"/>
<!-- layers -->
<path d="M635.700 308.800l5.800 3.300-5.800 3.300-5.800-3.300z" fill="#1e1e1e"/><path d="M635.700 304.400l5.800 3.300-5.800 3.300-5.800-3.300z" fill="url(#dlay)" stroke="#9a9a9a" stroke-width=".4"/>
<!-- scroll arrows -->
<path d="M616.600 79.400l2-2.400 2 2.400z" fill="#3a3a3a"/><path d="M616.600 448.600l2 2.400 2-2.400z" fill="#3a3a3a"/>
</svg>
<div id="panel" class="a"></div>
<div id="ptabs" class="a"></div>
<div class="ptab" style="left:488.4px;width:23.2px"></div>
<div class="ptab" style="left:511.6px;width:24px"></div>
<div class="a" style="left:535.6px;top:186.6px;width:38.4px;height:12.6px;background:linear-gradient(#ececec,#d8d8d8);border-right:1px solid #777"></div>
<div class="t" style="left:492.2px;top:188px;color:#222">描边</div>
<div class="t" style="left:516px;top:188px;color:#222">渐变</div>
<div class="t" style="left:538.2px;top:188px;font-size:5px;color:#333">◆</div>
<div class="t" style="left:543.2px;top:188px;color:#111">透明度</div>
<svg width="650" height="467" viewBox="0 0 650 467">
<path d="M598.2 190.6l2.6 2-2.6 2zM601.4 190.6l2.6 2-2.6 2z" fill="#1c1c1c"/>
<path d="M608.4 188.4v8.4" stroke="#5a5a5a" stroke-width=".7" stroke-dasharray=".8 .8"/>
<path d="M612.4 191.6h2.8l-1.4 1.8z" fill="#1c1c1c"/>
<path d="M616 190.4h5M616 192.2h5M616 194h5M616 195.8h5" stroke="#2a2a2a" stroke-width=".8"/>
</svg>
<div class="fld" style="left:492.6px;top:203px;width:38.4px;height:10px"></div>
<div class="t" style="left:494.6px;top:203.2px;color:#0c0c0c">正常</div>
<div class="btn" style="left:532.6px;top:203px;width:9.2px;height:10px"></div>
<div class="t" style="left:544px;top:203.2px">不透明度:</div>
<div class="fld" style="left:580.6px;top:203px;width:15.4px;height:10px"></div>
<div class="t" style="left:583px;top:203.2px;font-size:7px;letter-spacing:-.3px;color:#0c0c0c">100</div>
<div class="a" style="left:596px;top:203px;width:9.2px;height:10px;background:#f6f6f6;border:.5px solid #d4d4d4"></div>
<svg width="650" height="467" viewBox="0 0 650 467"><path d="M599.4 205.8l2.6 2.2-2.6 2.2z" fill="#222"/></svg>
<div class="t" style="left:606.8px;top:203px;font-size:7.6px;font-weight:bold">%</div>
<div class="a" style="left:491px;top:216.4px;width:130px;height:1px;background:#e9e9e9;border-top:.5px solid #bcbcbc"></div>
<!-- thumbnails -->
<div class="a" style="left:493.800px;top:222.200px;width:32.400px;height:32.600px;background:#fff;border:1px solid #767676;border-top-color:#5a5a5a"></div>
<svg width="650" height="467" viewBox="0 0 650 467">
<defs>
<linearGradient id="tb1" x1="0" x2="0" y1="0" y2="1"><stop offset="0" stop-color="#8a5a2c"/><stop offset=".4" stop-color="#b9894f"/><stop offset="1" stop-color="#875626"/></linearGradient>
<linearGradient id="tb2" x1="0" x2="1" y1="0" y2="0"><stop offset="0" stop-color="#94642f"/><stop offset=".4" stop-color="#b8884e"/><stop offset="1" stop-color="#855526"/></linearGradient>
</defs>
<path d="M497 224.600 L519 224.800 Q522.600 225.200 523 226 Q522.600 227.200 519.500 228 L504 232.600 L499.600 232 Z" fill="url(#tb1)" stroke="#6e4a22" stroke-width=".4"/>
<path d="M517.500 224.900 L519 224.800 Q522.600 225.200 523 226 Q522.600 227.200 519.500 228 L517.500 228.600 Z" fill="#a65a48" opacity=".8"/>
<path d="M496.400 225.600 L503.600 226.400 L503.400 240 L501.600 249 Q500.600 253 499.600 252.600 Q498.600 252.400 498 249 L496.600 240 Z" fill="url(#tb2)" stroke="#6e4a22" stroke-width=".4"/>
<path d="M497.700 247 L502 247 L501.600 249 Q500.600 253 499.600 252.600 Q498.600 252.400 498 249 Z" fill="#b85c4a"/>
<ellipse cx="500" cy="227.800" rx="2.200" ry="2.800" fill="#c09058" stroke="#6e4a22" stroke-width=".5"/>
<ellipse cx="499.900" cy="227.800" rx=".8" ry="1.100" fill="#4a2c14"/>
<path d="M528.4 236.2h2.4v5.6h-2.4z" fill="none" stroke="#8a8a8a" stroke-width=".6"/><path d="M529.6 234.8v8.4" stroke="#9a9a9a" stroke-width=".5" stroke-dasharray="1 1"/>
</svg>
<div class="a" style="left:533.600px;top:222px;width:33.200px;height:33px;background:linear-gradient(#484848,#8a8a8a 30%,#d2d2d2 62%,#fff 90%);border:1.800px solid #0c0c0c;border-radius:1.800px;box-shadow:0 0 0 .6px #a8a8a8,inset 1.400px 0 1.200px rgba(0,0,0,.4),inset -1.400px 0 1.200px rgba(0,0,0,.4)"></div>
<div class="chk" style="left:571.8px;top:229.4px"></div>
<div class="chk" style="left:571.8px;top:240.4px"></div>
<svg width="650" height="467" viewBox="0 0 650 467"><path d="M573.4 233l1.8 2.4 2.8-4.8M573.4 244l1.8 2.4 2.8-4.8" fill="none" stroke="#2a50b8" stroke-width="1.1"/></svg>
<div class="t" style="left:582px;top:228.4px">剪切</div>
<div class="t" style="left:582px;top:239.4px">反相蒙版</div>
<div class="a" style="left:491px;top:261.3px;width:130px;height:1px;background:#e9e9e9;border-top:.5px solid #bcbcbc"></div>
<div class="chk" style="left:492.6px;top:265.3px"></div>
<div class="t" style="left:502px;top:264.3px">隔离混合</div>
<div class="chk" style="left:554.6px;top:265.3px"></div>
<div class="t" style="left:564.6px;top:264.3px">挖空组</div>
<div class="chk" style="left:492.6px;top:274.9px"></div>
<div class="t" style="left:502px;top:273.9px">不透明度和蒙版用来定义挖空形状</div>
<div class="fld" style="left:42.600px;top:456px;width:25px;height:9.400px"></div>
<div class="t" style="left:44px;top:456.400px;font-size:7.200px;letter-spacing:-.3px;color:#0c0c0c">150%</div>
<div class="btn" style="left:69px;top:456px;width:9.400px;height:9.400px"></div>
<div class="fld" style="left:101.600px;top:456px;width:16px;height:9.400px"></div>
<div class="t" style="left:103.400px;top:456.400px;font-size:7.200px;color:#0c0c0c">1</div>
<div class="btn" style="left:118.600px;top:456px;width:9.400px;height:9.400px"></div>
<div class="a" style="left:160px;top:455.800px;width:102.400px;height:9.600px;background:linear-gradient(#dcdcdc,#cfcfcf);border-left:1px solid #b0b0b0"></div>
<div class="t" style="left:187.600px;top:456.200px">始终不保存</div>
<svg width="650" height="467" viewBox="0 0 650 467">
<g fill="#8a8a8a"><path d="M83 458.400h1v4.600h-1zM87 458.400v4.600l-2.800-2.300z"/><path d="M96.600 458.400v4.600l-2.800-2.300z"/><path d="M133 458.400v4.600l2.800-2.300z"/><path d="M142.600 458.400v4.600l2.800-2.300zM145.800 458.400h1v4.600h-1z"/></g>
<circle cx="155" cy="460.800" r="3" fill="#e4e4e4" stroke="#8a8a8a" stroke-width=".8"/><path d="M155 459v1.800h1.600" stroke="#777" stroke-width=".6" fill="none"/>
<path d="M256.400 458l3.200 2.700-3.200 2.700z" fill="#111"/>
<path d="M269.800 458.600v4l-2.400-2z" fill="#3a3a3a"/><path d="M607.800 458.600v4l2.400-2z" fill="#3a3a3a"/>
<rect x="434.600" y="456.200" width="8.400" height="8.600" rx="1.400" fill="#e6e6e6" stroke="#959da8" stroke-width=".7"/><path d="M437.400 458.400v4.200M438.800 458.400v4.200M440.200 458.400v4.200" stroke="#b4b4b4" stroke-width=".5"/>
</svg>
<svg width="650" height="467" viewBox="0 0 650 467">

<rect x="33.200" y="6.400" width="10" height="9.800" rx="1" fill="#b0b0b0" stroke="#7e7e7e" stroke-width=".7"/>
<rect x="52" y="6.600" width="8" height="8" fill="#c2c2c2" stroke="#9a9a9a" stroke-width=".5"/>
<path d="M422.700 3.400v14.400M477.600 3.400v14.400" stroke="#a4a4a4" stroke-width=".8"/><path d="M423.500 3.400v14.400M478.400 3.400v14.400" stroke="#e2e2e2" stroke-width=".6"/>
<path d="M467.400 10.600h4.400l-2.200 2.800z" fill="#222"/>
<rect x="485.400" y="6.200" width="114.200" height="10.800" rx="1.600" fill="#c0c0c0" stroke="#8e8e8e" stroke-width=".9"/>
<circle cx="493.200" cy="10.800" r="2" fill="none" stroke="#333" stroke-width=".9"/><path d="M491.800 12.400l-2 2.200" stroke="#333" stroke-width="1"/>
<path d="M610.800 12.600h5.400" stroke="#8e8e8e" stroke-width="1.400"/>
<rect x="623.200" y="8.200" width="5.800" height="4.800" fill="none" stroke="#8e8e8e" stroke-width="1"/><path d="M623.200 8.600h5.800" stroke="#8e8e8e" stroke-width="1.400"/>
<path d="M635.600 8l5 5.400M640.600 8l-5 5.400" stroke="#8e8e8e" stroke-width="1.100"/>
</svg>

<div class="t" style="left:430.800px;top:6.800px;color:#333">基本功能</div>
<div id="wm" class="a"></div>
<div class="a" style="left:7.800px;top:4.200px;width:13.800px;height:13.300px;border-radius:1px;background:linear-gradient(135deg,#c8a864,#c09a50 60%,#b48c44)"></div>
<div class="t" style="left:11.600px;top:6.200px;font-size:7.800px;font-weight:bold;color:#4a3a1a">Ai</div>
<svg width="650" height="467" viewBox="0 0 650 467"><path d="M3.800 5.800L13.900 13.700L3.800 21.600z" fill="#fff" fill-opacity=".86"/></svg>
<div id="wmt" class="a">来自百图汇<b>www.5tu.cn</b></div>
<div class="a" style="left:0;top:2.8px;width:2.6px;height:21px;background:rgba(255,255,255,.22)"></div>
</body>
</html>
